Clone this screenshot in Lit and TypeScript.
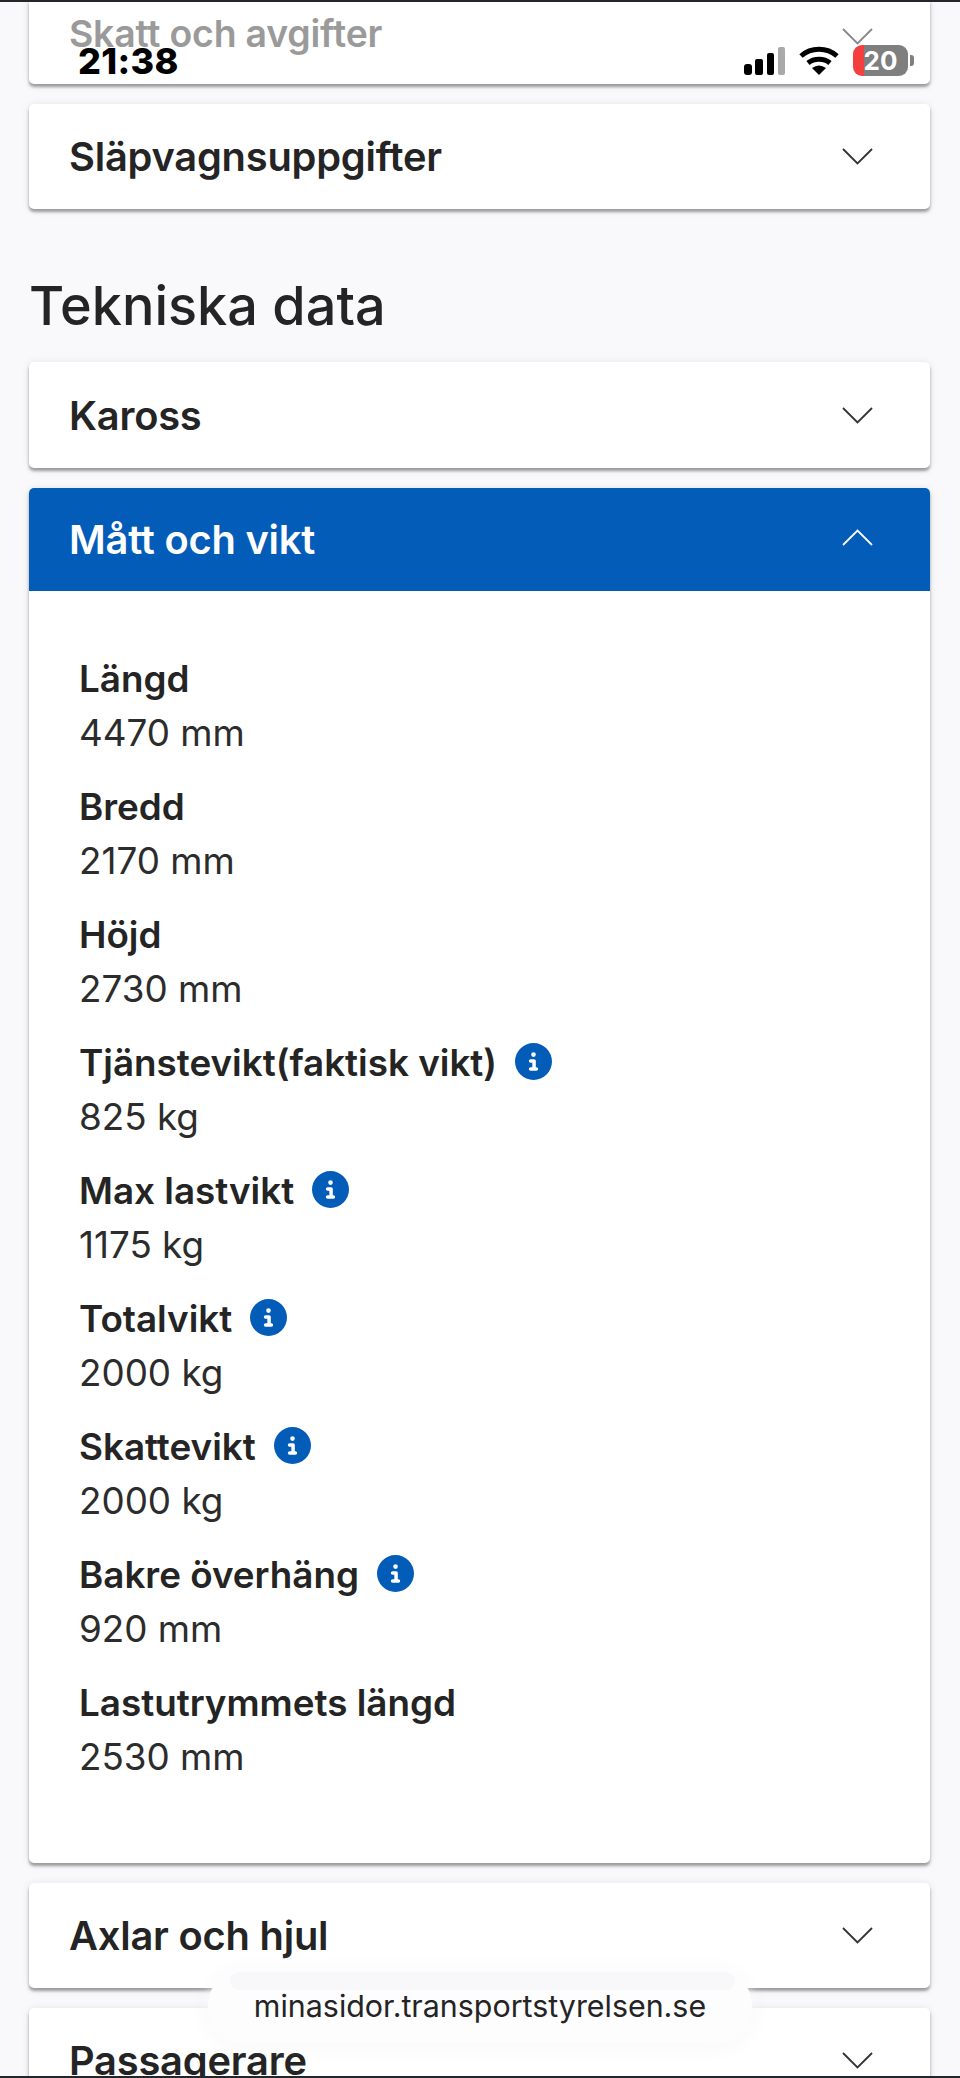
import { LitElement, html, css, svg } from 'lit';
import { customElement } from 'lit/decorators.js';

interface Measure {
  label: string;
  value: string;
  info?: boolean;
}

const MEASURES: Measure[] = [
  { label: 'Längd', value: '4470 mm' },
  { label: 'Bredd', value: '2170 mm' },
  { label: 'Höjd', value: '2730 mm' },
  { label: 'Tjänstevikt(faktisk vikt)', value: '825 kg', info: true },
  { label: 'Max lastvikt', value: '1175 kg', info: true },
  { label: 'Totalvikt', value: '2000 kg', info: true },
  { label: 'Skattevikt', value: '2000 kg', info: true },
  { label: 'Bakre överhäng', value: '920 mm', info: true },
  { label: 'Lastutrymmets längd', value: '2530 mm' },
];

const chevron = (up = false) => html`
  <svg class="chevron" viewBox="0 0 31 17" fill="none" stroke="currentColor" stroke-width="1.8">
    ${up ? svg`<path d="M1 16 L15.5 1.5 L30 16" />` : svg`<path d="M1 1 L15.5 15.5 L30 1" />`}
  </svg>
`;

const infoIcon = html`
  <svg class="info" viewBox="0 0 512 512" fill="#045cb9">
    <path d="M256 512A256 256 0 1 0 256 0a256 256 0 1 0 0 512zM216 336h24V272H216c-13.3 0-24-10.7-24-24s10.7-24 24-24h48c13.3 0 24 10.7 24 24v88h8c13.3 0 24 10.7 24 24s-10.7 24-24 24H216c-13.3 0-24-10.7-24-24s10.7-24 24-24zm40-208a32 32 0 1 1 0 64 32 32 0 1 1 0-64z" />
  </svg>
`;

@customElement('app-root')
export class AppRoot extends LitElement {
  static styles = css`
    :host {
      display: block;
      position: relative;
      height: 2078px;
      overflow: hidden;
      background: #f9f9fc;
      color: #242424;
      font-family: Inter, 'Noto Sans', sans-serif;
    }

    .page {
      display: flex;
      flex-direction: column;
      padding: 0 30px 0 29px;
    }

    .card {
      flex: none;
      background: #fff;
      border-radius: 5px;
      box-shadow: 0 3px 3px rgba(0, 0, 0, 0.34), 0 1px 9px rgba(0, 0, 0, 0.1);
      margin-bottom: 20px;
    }

    .header {
      display: flex;
      align-items: center;
      justify-content: space-between;
      height: 105px;
      padding: 0 57px 0 40px;
      font-size: 39.8px;
      font-weight: 600;
      letter-spacing: -0.2px;
    }

    .header.tall {
      height: 106px;
    }

    .chevron {
      width: 31px;
      height: 17px;
      color: #333;
      flex: none;
    }

    .card.cut {
      height: 84px;
      border-radius: 0 0 5px 5px;
    }

    .card.cut .header {
      height: 68px;
      color: #9a9a9a;
      align-items: flex-start;
      padding-top: 14px;
      font-size: 37.4px;
    }

    .card.cut .header span {
      line-height: 40px;
    }

    .card.cut .chevron {
      color: #888;
      margin-top: 14px;
    }

    h2 {
      margin: 0;
      height: 133px;
      padding-top: 39px;
      box-sizing: border-box;
      font-size: 54px;
      font-weight: 500;
      line-height: 76px;
    }

    .open .header {
      background: #045cb9;
      color: #fff;
      border-radius: 5px 5px 0 0;
      height: 103px;
    }

    .open .header .chevron {
      color: #fff;
      margin-top: -5px;
    }

    .panel {
      display: flex;
      flex-direction: column;
      gap: 19px;
      padding: 60px 50px 62px;
      height: 1272px;
      box-sizing: border-box;
    }

    .row {
      display: flex;
      flex-direction: column;
    }

    .label {
      display: flex;
      align-items: center;
      gap: 18px;
      height: 55px;
      font-size: 36.8px;
      font-weight: 600;
    }

    .value {
      height: 54px;
      line-height: 54px;
      font-size: 36.8px;
      font-weight: 400;
      color: #2c2c2c;
    }

    .info {
      width: 37px;
      height: 37px;
      flex: none;
      margin-top: -3px;
    }

    .status {
      position: absolute;
      top: 0;
      left: 0;
      right: 0;
      border-top: 2px solid #23262b;
    }

    .time {
      position: absolute;
      left: 78px;
      top: 37px;
      font-size: 36px;
      line-height: 44px;
      font-weight: 800;
      letter-spacing: 0.3px;
      color: #000;
    }

    .signal {
      position: absolute;
      left: 744px;
      top: 45px;
      width: 41px;
      height: 28px;
    }

    .wifi {
      position: absolute;
      left: 799px;
      top: 44px;
      width: 40px;
      height: 29px;
    }

    .battery {
      position: absolute;
      left: 853px;
      top: 43px;
      width: 55px;
      height: 31px;
      border-radius: 9px;
      background: linear-gradient(90deg, #f3403f 0 11px, #7f7f7f 11px);
      color: #fff;
      font-size: 26px;
      font-weight: 700;
      line-height: 31px;
      text-align: center;
    }

    .tip {
      position: absolute;
      left: 910px;
      top: 53px;
      width: 4px;
      height: 11px;
      border-radius: 0 3px 3px 0;
      background: #7f7f7f;
    }

    .url {
      position: absolute;
      left: 208px;
      top: 1968px;
      width: 544px;
      height: 75px;
      border-radius: 38px;
      background: #fdfdfe;
      box-shadow: 0 0 14px rgba(255, 255, 255, 0.8), 0 4px 24px rgba(0, 0, 0, 0.04);
      display: flex;
      align-items: center;
      justify-content: center;
      font-size: 30.4px;
      padding-top: 1px;
      box-sizing: border-box;
    }

    .url::before {
      content: '';
      position: absolute;
      left: 22px;
      right: 17px;
      top: 4px;
      height: 18px;
      border-radius: 12px;
      background: #f8f8fa;
    }

    .url span {
      position: relative;
    }

    .bottom-line {
      position: absolute;
      left: 0;
      right: 0;
      bottom: 0;
      height: 2px;
      background: #23262b;
    }
  `;

  private _renderCard(title: string, tall = false) {
    return html`
      <div class="card">
        <div class="header ${tall ? 'tall' : ''}"><span>${title}</span>${chevron()}</div>
      </div>
    `;
  }

  private _renderRow(item: Measure) {
    return html`
      <div class="row">
        <div class="label"><span>${item.label}</span>${item.info ? infoIcon : ''}</div>
        <div class="value">${item.value}</div>
      </div>
    `;
  }

  private _renderStatus() {
    return html`
      <div class="status">
        <div class="time">21:38</div>
        <svg class="signal" viewBox="0 0 41 28">
          <rect x="0" y="17" width="8" height="11" rx="3" fill="#000" />
          <rect x="11" y="12" width="8" height="16" rx="2" fill="#000" />
          <rect x="23" y="6" width="7" height="22" rx="2" fill="#000" />
          <rect x="34" y="0" width="7" height="28" rx="2" fill="#a9a9a9" />
        </svg>
        <svg class="wifi" viewBox="0 0 40 29" fill="none" stroke="#000" stroke-width="5">
          <path d="M2 10 C12 1 28 1 38 10" />
          <path d="M9 17 C15 12 25 12 31 17" />
          <path d="M13 22 Q20 17 27 22 L20 29 Z" fill="#000" stroke="none" />
        </svg>
        <div class="battery">20</div>
        <div class="tip"></div>
      </div>
    `;
  }

  render() {
    return html`
      <div class="page">
        <div class="card cut">
          <div class="header"><span>Skatt och avgifter</span>${chevron()}</div>
        </div>
        ${this._renderCard('Släpvagnsuppgifter')}
        <h2>Tekniska data</h2>
        ${this._renderCard('Kaross', true)}
        <div class="card open">
          <div class="header"><span>Mått och vikt</span>${chevron(true)}</div>
          <div class="panel">${MEASURES.map((m) => this._renderRow(m))}</div>
        </div>
        ${this._renderCard('Axlar och hjul')}
        ${this._renderCard('Passagerare')}
      </div>
      ${this._renderStatus()}
      <div class="url"><span>minasidor.transportstyrelsen.se</span></div>
      <div class="bottom-line"></div>
    `;
  }
}

declare global {
  interface HTMLElementTagNameMap {
    'app-root': AppRoot;
  }
}
